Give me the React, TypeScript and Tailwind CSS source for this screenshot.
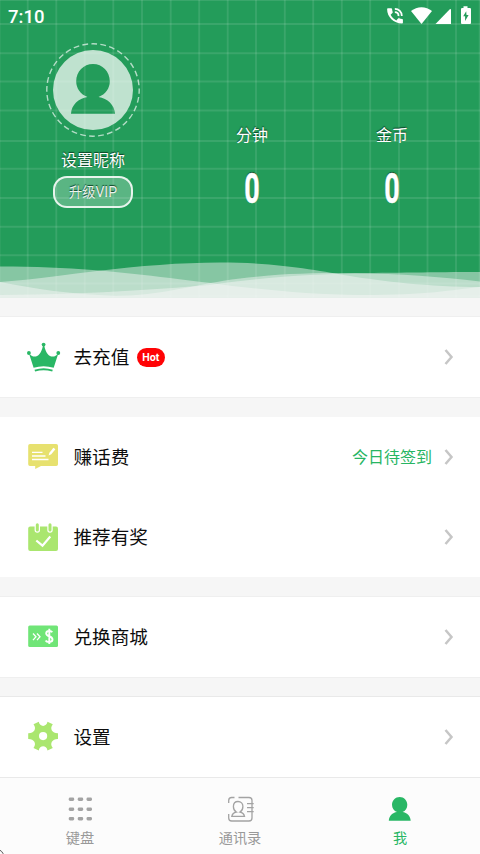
import React from "react";

const verticals = [-0.5, 27.7, 56.3, 84.7, 113.3, 142, 170.7, 199.2, 227.7, 256, 284.8, 313.2, 341.8, 370.2, 399, 427.5, 456, 479.7];
const horizontals = [0, 24, 53.2, 81.5, 110.5, 141, 168.7, 198, 226.8, 255.3, 283.5, 296];

const cjk = "font-['Noto_Sans_CJK_SC',sans-serif]";

function HeaderBackdrop() {
  return (
    <svg className="absolute inset-0 h-[298px] w-[480px]" viewBox="0 0 480 298" aria-hidden="true">
      <g stroke="#fff" strokeOpacity="0.105" strokeWidth="1.9">
        {verticals.map((x) => <path key={x} d={`M${x} 0V298`} />)}
        {horizontals.map((y) => <path key={y} d={`M0 ${y}H480`} />)}
      </g>
      <g fill="#f6f6f6" fillOpacity="0.47">
        <path d="M0 266.5C70 266.5 120 272 170 278S290 295 360 295S450 290 480 287V298H0Z" />
        <path d="M0 282C40 279 70 274 97 271C140 266 180 262.5 220 262.5C280 262.5 320 271 350 276S430 287 480 287V298H0Z" />
        <path d="M0 282C35 289 70 294 115 296C160 296 195 284 240 278.5C280 273.5 310 273 345 273C400 273 430 272 480 272V298H0Z" />
        <path d="M0 295C90 294 150 290 210 285C270 276 320 274 355 273.5C400 273.5 440 277 480 281.5V298H0Z" />
      </g>
    </svg>
  );
}

function StatusIcons() {
  return (
    <svg className="h-6 w-[90px]" viewBox="385 4 90 24" fill="#fff" aria-label="status">
      <g transform="translate(387 8) scale(.92) translate(-387 -8)">
        <path d="M388 8.2h3.5c.6 0 .9.3 1 .8.1 1.2.3 2.3.7 3.4.1.4 0 .8-.3 1.1l-2 1.9c1.4 2.8 3.4 4.7 6.2 6.1l1.9-2c.3-.3.7-.4 1.1-.3 1.1.4 2.2.6 3.4.7.4 0 .8.4.8.9v3.1c0 .5-.4.9-.9.9-9.2 0-16.3-7-16.3-15.7 0-.5.4-.9.9-.9Z" />
        <g fill="none" stroke="#fff" strokeWidth="1.9"><path d="M395.5 9c4.4 0 7.6 3.2 7.6 7.6M395.5 12.6c2.5 0 4 1.6 4 4" /></g>
      </g>
      <path d="M411 11.1C417 6 426 6 432 11.1L421.5 24Z" />
      <path d="M435.5 24 449.8 9.2c.6-.6 1.2-.3 1.2.4V24Z" />
      <path fillRule="evenodd" d="M463.5 6.2h4V8h2.2c.7 0 1.3.5 1.3 1.2v13.5c0 .8-.5 1.3-1.3 1.3h-7.4c-.8 0-1.3-.5-1.3-1.3V9.2c0-.7.6-1.2 1.3-1.2h1.2Zm2.7 5-3 5h1.9V21l3.5-6h-2.1Z" />
    </svg>
  );
}

function Avatar() {
  return (
    <svg className="h-24 w-24" viewBox="45 42 96 96" aria-label="avatar">
      <circle cx="93" cy="90" r="46.2" fill="none" stroke="#fff" strokeOpacity=".65" strokeWidth="1.4" strokeDasharray="5.8 3.27" strokeDashoffset="2" />
      <path fill="#fff" fillOpacity=".71" fillRule="evenodd" d="M93 50a40 40 0 1 0 0 80 40 40 0 1 0 0-80ZM93 64C102.5 64 109.8 71.5 109.8 81.3C109.8 88.5 105.5 94.3 98.5 97.1C107.5 98.5 114.5 105 115 113.8H71C71.5 105 78.5 98.5 87.5 97.1C80.5 94.3 76.2 88.5 76.2 81.3C76.2 71.5 83.5 64 93 64Z" />
    </svg>
  );
}

function Crown() {
  return (
    <svg className="h-9 w-9" viewBox="25 339 36 36" fill="#29b765">
      <circle cx="43.6" cy="344.6" r="1.9" /><circle cx="28.9" cy="353" r="1.9" /><circle cx="58.3" cy="353" r="1.9" />
      <path d="M29 353.5C33 358.5 40.5 358.5 43 345.5H44.2C46.7 358.5 54.2 358.5 58.3 353.5L53.7 367.7C47 365.7 40.2 365.7 33.6 367.7Z" />
      <path d="M34.8 370.7C40.6 368.7 46.6 368.7 52.5 370.7" fill="none" stroke="#29b765" strokeWidth="1.9" />
    </svg>
  );
}

function MessageIcon() {
  return (
    <svg className="h-9 w-9" viewBox="25 439 36 36">
      <path fill="#e7e16f" d="M30 444H56.2Q58 444 58 445.8V464.2Q58 466 56.2 466H41L35.2 469V466H30Q28.2 466 28.2 464.2V445.8Q28.2 444 30 444Z" />
      <path stroke="#fff" strokeWidth="1.3" d="M32 452.3H42.5M32 456H45.5M32 459.5H48.5" />
      <path fill="#fff" d="m48.6 455.5.8-2.7 4-5 2 1.5-4.1 5Z" />
    </svg>
  );
}

function CalendarIcon() {
  return (
    <svg className="h-9 w-9" viewBox="25 519 36 36">
      <rect x="28.2" y="526.5" width="29.8" height="24.5" rx="2" fill="#aae66f" />
      <path d="M37.3 525V530M50 525V530" stroke="#fff" strokeWidth="5.4" strokeLinecap="round" />
      <path d="M37.3 524.8V530M50 524.8V530" stroke="#aae66f" strokeWidth="3" strokeLinecap="round" />
      <path d="m36.3 540.5 6.2 5.2 7.8-9.2" fill="none" stroke="#fff" strokeWidth="2.2" />
    </svg>
  );
}

function VoucherIcon() {
  return (
    <svg className="h-9 w-9" viewBox="25 619 36 36">
      <rect x="28.2" y="625.5" width="29.8" height="21.5" rx="1.5" fill="#70e577" />
      <g fill="none" stroke="#fff">
        <path d="m33 633.5 3 3.3-3 3.3m4-6.6 3 3.3-3 3.3" strokeWidth="1.3" />
        <path d="M52.3 632.3C51 630.5 46.2 630.4 46.2 633.5C46.2 636.8 52.5 635.7 52.5 639.5C52.5 642.6 47 642.8 45.6 640.5M49.3 628.8V644" strokeWidth="1.9" />
      </g>
    </svg>
  );
}

function GearIcon() {
  return (
    <svg className="h-9 w-9" viewBox="25 719 36 36">
      <path fill="#aae66f" fillRule="evenodd" d="M33.5 724.2 38.8 721.8C39.5 727.3 46.7 727.3 47.5 721.8L52.8 724.2C49.2 728.8 52.4 733.4 58 733.2V739C52.4 738.8 49.2 743.4 52.8 748L47.5 750.4C46.7 745 39.5 745 38.8 750.4L33.5 748C37.1 743.4 33.9 738.8 28.2 739V733.2C33.9 733.4 37.1 728.8 33.5 724.2ZM43.1 732a4.1 4.1 0 1 0 0 8.2 4.1 4.1 0 1 0 0-8.2Z" />
    </svg>
  );
}

function Row({ icon, label, hot, note }: { icon: React.ReactNode; label: string; hot?: boolean; note?: string }) {
  return (
    <div className="flex h-20 items-center bg-white pl-[25px] pr-[26px]">
      {icon}
      <span className="ml-[12.5px] pb-[2px] text-[18.6px] leading-7 text-[#0d0d0d]">{label}</span>
      {hot && <span className="ml-[7.5px] flex h-[19px] w-7 items-center justify-center rounded-full bg-[#ff0305] font-[Inter,sans-serif] text-[10px] font-bold text-white">Hot</span>}
      <span className="ml-auto pb-[2px] text-[16px] text-[#27b563]">{note}</span>
      <svg className="ml-3 h-4 w-[10px]" viewBox="0 0 10 16" fill="none" stroke="#c6c6c6" strokeWidth="2.5"><path d="m1.5 1 6 7-6 7" /></svg>
    </div>
  );
}

function Tab({ label, active, children }: { label: string; active?: boolean; children: React.ReactNode }) {
  return (
    <div className={`flex flex-1 flex-col items-center pt-[13px] text-[14.2px] leading-5 ${active ? "text-[#29b765]" : "text-[#999]"}`}>
      {children}
      <span>{label}</span>
    </div>
  );
}

export default function App() {
  return (
    <main className={`relative flex h-[854px] w-[480px] flex-col overflow-hidden bg-[#f6f6f6] ${cjk}`}>
      <header className="relative h-[298px] shrink-0 bg-[#239c5a] text-white">
        <HeaderBackdrop />
        <div className="relative flex h-8 items-start justify-between pl-2 pr-[5px] pt-1">
          <span className="font-[Roboto,sans-serif] text-[18.5px] font-medium leading-[26px]">7:10</span>
          <StatusIcons />
        </div>
        <div className="relative flex pt-[10px]">
          <div className="flex w-[182px] flex-col items-center pl-1">
            <Avatar />
            <div className="mt-[10px] text-[16px] leading-[22px] [text-shadow:0_-1px_1px_#0b4024]">设置昵称</div>
            <div className="mt-[6px] flex h-8 w-20 items-center justify-center rounded-[14px] border-2 border-white/85 bg-white/25 text-[13.2px] leading-5 text-white/90 [text-shadow:0_-1px_1px_#0b4024]">升级<span className="font-[Roboto,sans-serif] text-[14px]">VIP</span></div>
          </div>
          {["分钟", "金币"].map((label) => (
            <div key={label} className="flex w-[140px] flex-col items-center pt-[81px]">
              <span className="text-[16px] leading-[22px] [text-shadow:0_-1px_1px_#0b4024]">{label}</span>
              <span className="mt-[27px] flex h-[34px] w-[18px] items-center justify-center text-[42px] font-bold leading-[34px] [text-shadow:0_-1px_1px_#0b4024]"><span className="inline-block scale-x-[0.64] font-[Roboto,sans-serif] [-webkit-text-stroke:0.6px_#fff]">0</span></span>
            </div>
          ))}
        </div>
      </header>
      <section className="mt-[19px] shadow-[0_0_1px_#ccc]"><Row icon={<Crown />} label="去充值" hot /></section>
      <section className="mt-5"><Row icon={<MessageIcon />} label="赚话费" note="今日待签到" /><Row icon={<CalendarIcon />} label="推荐有奖" /></section>
      <section className="mt-5 shadow-[0_0_1px_#ccc]"><Row icon={<VoucherIcon />} label="兑换商城" /></section>
      <section className="mt-5 shadow-[0_0_1px_#aaa]"><Row icon={<GearIcon />} label="设置" /></section>
      <nav className="flex h-[77px] shrink-0 border-t border-[#e9e9e9] bg-[#fcfcfc]">
        <Tab label="键盘">
          <svg className="h-9 w-9" viewBox="62 791 36 36" fill="#a3a3a3">
            {[797.5, 807.5, 817].map((y) => [68.7, 77.7, 86.5].map((x) => <rect key={`${x}-${y}`} x={x} y={y} width="5.5" height="3.5" rx="1.4" />))}
          </svg>
        </Tab>
        <Tab label="通讯录">
          <svg className="h-9 w-9" viewBox="222 791 36 36" fill="none" stroke="#a3a3a3" strokeWidth="1.3">
            <path d="M228.7 803V800.5Q228.7 797.5 231.7 797.5H234.5M238.5 797.5H249Q252 797.5 252 800.5V818Q252 821 249 821H231.7Q228.7 821 228.7 818V814M247 803.7H253.7M247 807.7H253.7M247 811.7H253.7" />
            <path d="M238 801.5C235 801.5 233.4 803.8 233.4 806.5C233.4 809 234.5 811 236.3 812C234 812.5 232.3 814 231.8 816.3H244.5C244 814 242.3 812.5 240 812C241.8 811 242.9 809 242.9 806.5C242.9 803.8 241 801.5 238 801.5Z" />
          </svg>
        </Tab>
        <Tab label="我" active>
          <svg className="h-9 w-9" viewBox="382 791 36 36" fill="#29b765"><path d="M399.7 797C404 797 407.3 800.5 407.3 804.7C407.3 808.2 405.5 810.8 402.5 812C407 812.5 410.5 816 410.7 820.8H388.8C389 816 392.5 812.5 397 812C394 810.8 392 808.2 392 804.7C392 800.5 395.4 797 399.7 797Z" /></svg>
        </Tab>
      </nav>
      <span className="absolute -left-[10px] top-[849px] h-[14px] w-[14px] rounded-full border border-[#555]" />
    </main>
  );
}
